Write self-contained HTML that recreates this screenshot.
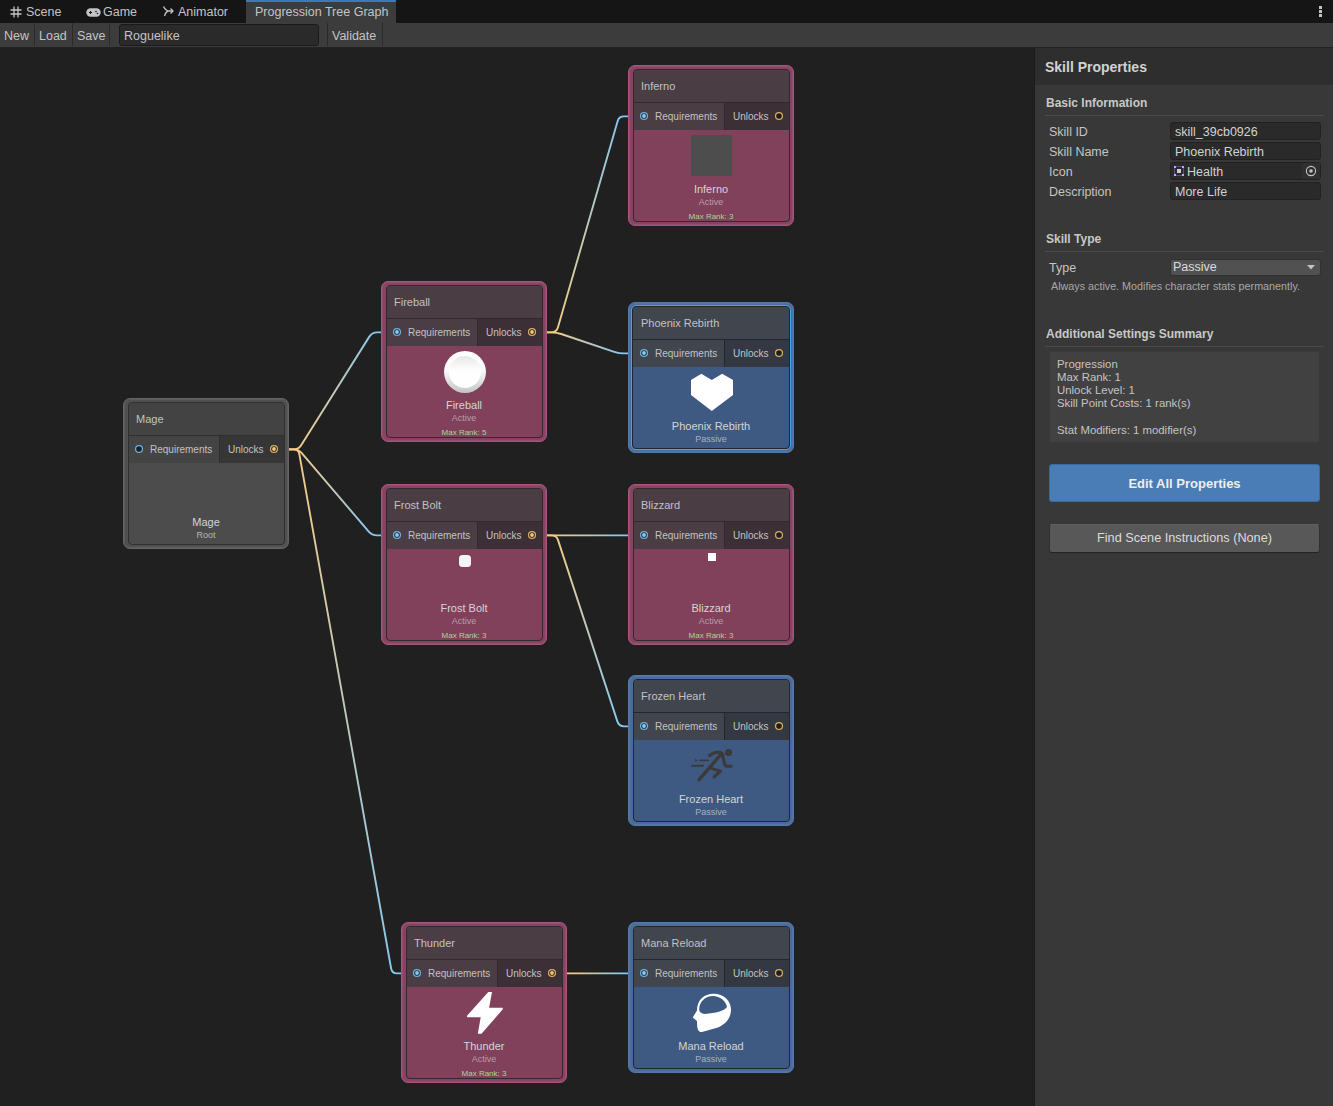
<!DOCTYPE html>
<html><head><meta charset="utf-8"><style>
html,body{margin:0;padding:0;}
body{width:1333px;height:1106px;overflow:hidden;position:relative;background:#202020;font-family:"Liberation Sans", sans-serif;}
.a{position:absolute;white-space:nowrap;}
</style></head><body>
<!-- tab bar -->
<div class="a" style="left:0;top:0;width:1333px;height:23px;background:#151515"></div>
<svg class="a" style="left:10px;top:6px" width="12" height="12" viewBox="0 0 12 12"><g stroke="#c4c4c4" stroke-width="1.3" fill="none"><path d="M4,0.5V11.5M8,0.5V11.5M0.5,4H11.5M0.5,8H11.5"/></g></svg>
<div class="a" style="left:26px;top:4.7px;font-size:12.5px;line-height:15px;color:#c4c4c4">Scene</div>
<svg class="a" style="left:86px;top:8px" width="15" height="9" viewBox="0 0 15 9"><rect x="0.3" y="0.3" width="14.4" height="8.4" rx="4.2" fill="#c4c4c4"/><path d="M3,4.5H6M4.5,3V6" stroke="#151515" stroke-width="1"/><circle cx="10" cy="3.5" r="0.8" fill="#151515"/><circle cx="11.5" cy="5.5" r="0.8" fill="#151515"/></svg>
<div class="a" style="left:103px;top:4.7px;font-size:12.5px;line-height:15px;color:#c4c4c4">Game</div>
<svg class="a" style="left:163px;top:6px" width="11" height="11" viewBox="0 0 11 11"><g stroke="#c4c4c4" stroke-width="1.3" fill="none"><path d="M0.5,0.5 Q3,5 6,5 H10 M6,5 Q3,5 1.5,10"/><path d="M7.5,2.5 L10,5 L7.5,7.5"/></g></svg>
<div class="a" style="left:178px;top:4.7px;font-size:12.5px;line-height:15px;color:#c4c4c4">Animator</div>
<div class="a" style="left:246px;top:0;width:150px;height:23px;background:#3c3c3c;border-top:2px solid #3a79bb;box-sizing:border-box"></div>
<div class="a" style="left:255px;top:4.7px;font-size:12.5px;line-height:15px;color:#c4c4c4">Progression Tree Graph</div>
<div class="a" style="left:1319px;top:6px;width:3px;height:11px"><div class="a" style="left:0;top:0;width:2.5px;height:2.5px;background:#c4c4c4"></div><div class="a" style="left:0;top:4.2px;width:2.5px;height:2.5px;background:#c4c4c4"></div><div class="a" style="left:0;top:8.4px;width:2.5px;height:2.5px;background:#c4c4c4"></div></div>
<!-- toolbar -->
<div class="a" style="left:0;top:23px;width:1333px;height:24px;background:#3c3c3c"></div><div class="a" style="left:0;top:47px;width:1333px;height:1px;background:#222222"></div>
<div class="a" style="left:34px;top:23px;width:1px;height:23px;background:#2a2a2a"></div>
<div class="a" style="left:72px;top:23px;width:1px;height:23px;background:#2a2a2a"></div>
<div class="a" style="left:109px;top:23px;width:1px;height:23px;background:#2a2a2a"></div>
<div class="a" style="left:327px;top:23px;width:1px;height:23px;background:#2a2a2a"></div>
<div class="a" style="left:382px;top:23px;width:1px;height:23px;background:#2a2a2a"></div>
<div class="a" style="left:119px;top:24px;width:200px;height:22px;background:#2a2a2a;border:1px solid #1a1a1a;border-radius:3px;box-sizing:border-box"></div>
<div class="a" style="left:4px;top:29px;font-size:12.5px;line-height:15px;color:#c4c4c4">New</div>
<div class="a" style="left:39px;top:29px;font-size:12.5px;line-height:15px;color:#c4c4c4">Load</div>
<div class="a" style="left:77px;top:29px;font-size:12.5px;line-height:15px;color:#c4c4c4">Save</div>
<div class="a" style="left:124px;top:29px;font-size:12.5px;line-height:15px;color:#c4c4c4">Roguelike</div>
<div class="a" style="left:332px;top:29px;font-size:12.5px;line-height:15px;color:#c4c4c4">Validate</div>
<!-- graph -->
<svg style="position:absolute;left:0;top:0" width="1034" height="1106" viewBox="0 0 1034 1106"><defs><linearGradient id="g0" gradientUnits="userSpaceOnUse" x1="293.5" y1="449.4" x2="377" y2="332.4"><stop offset="0" stop-color="#f4cb84"/><stop offset="1" stop-color="#86c7ef"/></linearGradient><linearGradient id="g1" gradientUnits="userSpaceOnUse" x1="293.5" y1="449.4" x2="377" y2="535.4"><stop offset="0" stop-color="#f4cb84"/><stop offset="1" stop-color="#86c7ef"/></linearGradient><linearGradient id="g2" gradientUnits="userSpaceOnUse" x1="293.5" y1="449.4" x2="397" y2="973.4"><stop offset="0" stop-color="#f4cb84"/><stop offset="1" stop-color="#86c7ef"/></linearGradient><linearGradient id="g3" gradientUnits="userSpaceOnUse" x1="551.5" y1="332.4" x2="624" y2="116.4"><stop offset="0" stop-color="#f4cb84"/><stop offset="1" stop-color="#86c7ef"/></linearGradient><linearGradient id="g4" gradientUnits="userSpaceOnUse" x1="551.5" y1="332.4" x2="624" y2="353.4"><stop offset="0" stop-color="#f4cb84"/><stop offset="1" stop-color="#86c7ef"/></linearGradient><linearGradient id="g5" gradientUnits="userSpaceOnUse" x1="551.5" y1="535.4" x2="624" y2="535.4"><stop offset="0" stop-color="#f4cb84"/><stop offset="1" stop-color="#86c7ef"/></linearGradient><linearGradient id="g6" gradientUnits="userSpaceOnUse" x1="551.5" y1="535.4" x2="624" y2="726.4"><stop offset="0" stop-color="#f4cb84"/><stop offset="1" stop-color="#86c7ef"/></linearGradient><linearGradient id="g7" gradientUnits="userSpaceOnUse" x1="571.5" y1="973.4" x2="624" y2="973.4"><stop offset="0" stop-color="#f4cb84"/><stop offset="1" stop-color="#86c7ef"/></linearGradient></defs><path d="M273.5,449.4 L293.5,449.4 Q298.5,449.4 301.16,445.17 L369.34,336.63 Q372,332.4 377,332.4 L397,332.4" fill="none" stroke="url(#g0)" stroke-width="1.9" stroke-linejoin="round"/><path d="M273.5,449.4 L293.5,449.4 Q298.5,449.4 301.75,453.20 L368.75,531.60 Q372,535.4 377,535.4 L397,535.4" fill="none" stroke="url(#g1)" stroke-width="1.9" stroke-linejoin="round"/><path d="M273.5,449.4 L293.5,449.4 Q298.5,449.4 299.38,454.32 L391.12,968.48 Q392,973.4 397,973.4 L417,973.4" fill="none" stroke="url(#g2)" stroke-width="1.9" stroke-linejoin="round"/><path d="M531.5,332.4 L551.5,332.4 Q556.5,332.4 557.89,327.60 L617.61,121.20 Q619,116.4 624,116.4 L644,116.4" fill="none" stroke="url(#g3)" stroke-width="1.9" stroke-linejoin="round"/><path d="M531.5,332.4 L551.5,332.4 Q556.5,332.4 561.24,333.99 L614.26,351.81 Q619,353.4 624,353.4 L644,353.4" fill="none" stroke="url(#g4)" stroke-width="1.9" stroke-linejoin="round"/><path d="M531.5,535.4 L644,535.4" fill="none" stroke="url(#g5)" stroke-width="1.9" stroke-linejoin="round"/><path d="M531.5,535.4 L551.5,535.4 Q556.5,535.4 558.05,540.15 L617.45,721.65 Q619,726.4 624,726.4 L644,726.4" fill="none" stroke="url(#g6)" stroke-width="1.9" stroke-linejoin="round"/><path d="M551.5,973.4 L644,973.4" fill="none" stroke="url(#g7)" stroke-width="1.9" stroke-linejoin="round"/></svg>
<div style="position:absolute;left:123px;top:398px;width:166px;height:151px;box-sizing:border-box;border-radius:7px;background:#505050;border:1px solid #646464;box-shadow:inset 0 0 0 1px #5a5a5a">
<div style="position:absolute;left:4px;top:3px;right:3px;bottom:3px;border:1px solid #303030;border-radius:4px;background:#4c4c4c;overflow:hidden">
<div style="position:absolute;left:0;top:0;right:0;height:32px;background:#434343;border-bottom:1px solid #303030"></div>
<div style="position:absolute;left:7px;top:10px;font-size:11px;line-height:13px;color:#c2c2c2;white-space:nowrap">Mage</div>
<div style="position:absolute;left:0;top:33px;width:90px;height:27px;background:#444444"></div>
<div style="position:absolute;left:90px;top:33px;right:0;height:27px;background:#363636;border-left:1px solid #303030"></div>
<div style="position:absolute;left:21px;top:41.2px;font-size:10px;line-height:12px;color:#c2c2c2;white-space:nowrap">Requirements</div>
<div style="position:absolute;left:99px;top:41.2px;font-size:10px;line-height:12px;color:#c2c2c2;white-space:nowrap">Unlocks</div>
</div></div>
<svg style="position:absolute;left:134px;top:444.4px" width="10" height="10" viewBox="0 0 10 10"><circle cx="5" cy="5" r="3.45" fill="#1f1f1f" stroke="#6cb2e0" stroke-width="1.25"/></svg>
<svg style="position:absolute;left:268.5px;top:444.4px" width="10" height="10" viewBox="0 0 10 10"><circle cx="5" cy="5" r="3.45" fill="rgba(20,20,24,0.55)" stroke="#dcae62" stroke-width="1.25"/><circle cx="5" cy="5" r="1.9" fill="#f2c77a"/></svg>
<div style="position:absolute;left:123px;top:515.8px;width:166px;text-align:center;font-size:11px;line-height:13px;color:#d4d4d4;white-space:nowrap">Mage</div>
<div style="position:absolute;left:123px;top:529.9px;width:166px;text-align:center;font-size:9px;line-height:10px;color:#b4b4b4;white-space:nowrap">Root</div><div style="position:absolute;left:381px;top:281px;width:166px;height:161px;box-sizing:border-box;border-radius:7px;background:#85445f;border:1px solid #a9547e;box-shadow:inset 0 0 0 1px #974c6f">
<div style="position:absolute;left:4px;top:3px;right:3px;bottom:3px;border:1px solid #36262d;border-radius:4px;background:#82415b;overflow:hidden">
<div style="position:absolute;left:0;top:0;right:0;height:32px;background:#4b3d44;border-bottom:1px solid #36262d"></div>
<div style="position:absolute;left:7px;top:10px;font-size:11px;line-height:13px;color:#c2c2c2;white-space:nowrap">Fireball</div>
<div style="position:absolute;left:0;top:33px;width:90px;height:27px;background:#4b3d44"></div>
<div style="position:absolute;left:90px;top:33px;right:0;height:27px;background:#3d2f36;border-left:1px solid #36262d"></div>
<div style="position:absolute;left:21px;top:41.2px;font-size:10px;line-height:12px;color:#c2c2c2;white-space:nowrap">Requirements</div>
<div style="position:absolute;left:99px;top:41.2px;font-size:10px;line-height:12px;color:#c2c2c2;white-space:nowrap">Unlocks</div>
</div></div>
<svg style="position:absolute;left:392px;top:327.4px" width="10" height="10" viewBox="0 0 10 10"><circle cx="5" cy="5" r="3.45" fill="rgba(20,20,24,0.55)" stroke="#6cb2e0" stroke-width="1.25"/><circle cx="5" cy="5" r="1.9" fill="#86cdf6"/></svg>
<svg style="position:absolute;left:526.5px;top:327.4px" width="10" height="10" viewBox="0 0 10 10"><circle cx="5" cy="5" r="3.45" fill="rgba(20,20,24,0.55)" stroke="#dcae62" stroke-width="1.25"/><circle cx="5" cy="5" r="1.9" fill="#f2c77a"/></svg>
<div style="position:absolute;left:381px;top:398.8px;width:166px;text-align:center;font-size:11px;line-height:13px;color:#d4d4d4;white-space:nowrap">Fireball</div>
<div style="position:absolute;left:381px;top:412.9px;width:166px;text-align:center;font-size:9px;line-height:10px;color:#b59faa;white-space:nowrap">Active</div>
<div style="position:absolute;left:381px;top:427.8px;width:166px;text-align:center;font-size:8px;line-height:9px;color:#a6d695;white-space:nowrap">Max Rank: 5</div>
<div style="position:absolute;left:443.8px;top:350.6px;width:42.3px;height:42.3px;border-radius:50%;background:linear-gradient(to bottom,#ffffff 0,#fafafa 45%,#c4c4c4 100%)"><div style="position:absolute;left:5px;top:5px;right:5px;bottom:5px;border-radius:50%;background:linear-gradient(to bottom,#e8e8e8 0,#fdfdfd 45%,#ffffff 100%)"></div></div><div style="position:absolute;left:628px;top:65px;width:166px;height:161px;box-sizing:border-box;border-radius:7px;background:#85445f;border:1px solid #a9547e;box-shadow:inset 0 0 0 1px #974c6f">
<div style="position:absolute;left:4px;top:3px;right:3px;bottom:3px;border:1px solid #36262d;border-radius:4px;background:#82415b;overflow:hidden">
<div style="position:absolute;left:0;top:0;right:0;height:32px;background:#4b3d44;border-bottom:1px solid #36262d"></div>
<div style="position:absolute;left:7px;top:10px;font-size:11px;line-height:13px;color:#c2c2c2;white-space:nowrap">Inferno</div>
<div style="position:absolute;left:0;top:33px;width:90px;height:27px;background:#4b3d44"></div>
<div style="position:absolute;left:90px;top:33px;right:0;height:27px;background:#3d2f36;border-left:1px solid #36262d"></div>
<div style="position:absolute;left:21px;top:41.2px;font-size:10px;line-height:12px;color:#c2c2c2;white-space:nowrap">Requirements</div>
<div style="position:absolute;left:99px;top:41.2px;font-size:10px;line-height:12px;color:#c2c2c2;white-space:nowrap">Unlocks</div>
</div></div>
<svg style="position:absolute;left:639px;top:111.4px" width="10" height="10" viewBox="0 0 10 10"><circle cx="5" cy="5" r="3.45" fill="rgba(20,20,24,0.55)" stroke="#6cb2e0" stroke-width="1.25"/><circle cx="5" cy="5" r="1.9" fill="#86cdf6"/></svg>
<svg style="position:absolute;left:773.5px;top:111.4px" width="10" height="10" viewBox="0 0 10 10"><circle cx="5" cy="5" r="3.45" fill="#1f1f1f" stroke="#dcae62" stroke-width="1.25"/></svg>
<div style="position:absolute;left:628px;top:182.8px;width:166px;text-align:center;font-size:11px;line-height:13px;color:#d4d4d4;white-space:nowrap">Inferno</div>
<div style="position:absolute;left:628px;top:196.9px;width:166px;text-align:center;font-size:9px;line-height:10px;color:#b59faa;white-space:nowrap">Active</div>
<div style="position:absolute;left:628px;top:211.8px;width:166px;text-align:center;font-size:8px;line-height:9px;color:#a6d695;white-space:nowrap">Max Rank: 3</div>
<div style="position:absolute;left:691px;top:135px;width:41px;height:41px;background:#4d4d4d"></div><div style="position:absolute;left:628px;top:302px;width:166px;height:151px;box-sizing:border-box;border-radius:7px;background:#4a6c9c;border:1px solid #5578aa;box-shadow:inset 0 0 0 1px #5074a5">
<div style="position:absolute;left:2px;top:2px;right:2px;bottom:2px;border:1px solid #46a7e8;border-radius:5px"></div>
<div style="position:absolute;left:3px;top:3px;right:3px;bottom:3px;border:1px solid #22262e;border-radius:4px;background:#3f5a82;overflow:hidden">
<div style="position:absolute;left:0;top:0;right:0;height:32px;background:#41454e;border-bottom:1px solid #22262e"></div>
<div style="position:absolute;left:8px;top:10px;font-size:11px;line-height:13px;color:#c2c2c2;white-space:nowrap">Phoenix Rebirth</div>
<div style="position:absolute;left:0;top:33px;width:91px;height:27px;background:#41454e"></div>
<div style="position:absolute;left:91px;top:33px;right:0;height:27px;background:#343842;border-left:1px solid #22262e"></div>
<div style="position:absolute;left:22px;top:41.2px;font-size:10px;line-height:12px;color:#c2c2c2;white-space:nowrap">Requirements</div>
<div style="position:absolute;left:100px;top:41.2px;font-size:10px;line-height:12px;color:#c2c2c2;white-space:nowrap">Unlocks</div>
</div></div>
<svg style="position:absolute;left:639px;top:348.4px" width="10" height="10" viewBox="0 0 10 10"><circle cx="5" cy="5" r="3.45" fill="rgba(20,20,24,0.55)" stroke="#6cb2e0" stroke-width="1.25"/><circle cx="5" cy="5" r="1.9" fill="#86cdf6"/></svg>
<svg style="position:absolute;left:773.5px;top:348.4px" width="10" height="10" viewBox="0 0 10 10"><circle cx="5" cy="5" r="3.45" fill="#1f1f1f" stroke="#dcae62" stroke-width="1.25"/></svg>
<div style="position:absolute;left:628px;top:419.8px;width:166px;text-align:center;font-size:11px;line-height:13px;color:#d4d4d4;white-space:nowrap">Phoenix Rebirth</div>
<div style="position:absolute;left:628px;top:433.9px;width:166px;text-align:center;font-size:9px;line-height:10px;color:#a6b1c2;white-space:nowrap">Passive</div>
<svg style="position:absolute;left:628px;top:302px" width="166" height="160" viewBox="628 302 166 160"><polygon fill="#ffffff" points="691,380 701.3,373.8 711.8,380 722.2,373.8 733,380 733,395 711.8,411 691,395"/></svg><div style="position:absolute;left:381px;top:484px;width:166px;height:161px;box-sizing:border-box;border-radius:7px;background:#85445f;border:1px solid #a9547e;box-shadow:inset 0 0 0 1px #974c6f">
<div style="position:absolute;left:4px;top:3px;right:3px;bottom:3px;border:1px solid #36262d;border-radius:4px;background:#82415b;overflow:hidden">
<div style="position:absolute;left:0;top:0;right:0;height:32px;background:#4b3d44;border-bottom:1px solid #36262d"></div>
<div style="position:absolute;left:7px;top:10px;font-size:11px;line-height:13px;color:#c2c2c2;white-space:nowrap">Frost Bolt</div>
<div style="position:absolute;left:0;top:33px;width:90px;height:27px;background:#4b3d44"></div>
<div style="position:absolute;left:90px;top:33px;right:0;height:27px;background:#3d2f36;border-left:1px solid #36262d"></div>
<div style="position:absolute;left:21px;top:41.2px;font-size:10px;line-height:12px;color:#c2c2c2;white-space:nowrap">Requirements</div>
<div style="position:absolute;left:99px;top:41.2px;font-size:10px;line-height:12px;color:#c2c2c2;white-space:nowrap">Unlocks</div>
</div></div>
<svg style="position:absolute;left:392px;top:530.4px" width="10" height="10" viewBox="0 0 10 10"><circle cx="5" cy="5" r="3.45" fill="rgba(20,20,24,0.55)" stroke="#6cb2e0" stroke-width="1.25"/><circle cx="5" cy="5" r="1.9" fill="#86cdf6"/></svg>
<svg style="position:absolute;left:526.5px;top:530.4px" width="10" height="10" viewBox="0 0 10 10"><circle cx="5" cy="5" r="3.45" fill="rgba(20,20,24,0.55)" stroke="#dcae62" stroke-width="1.25"/><circle cx="5" cy="5" r="1.9" fill="#f2c77a"/></svg>
<div style="position:absolute;left:381px;top:601.8px;width:166px;text-align:center;font-size:11px;line-height:13px;color:#d4d4d4;white-space:nowrap">Frost Bolt</div>
<div style="position:absolute;left:381px;top:615.9px;width:166px;text-align:center;font-size:9px;line-height:10px;color:#b59faa;white-space:nowrap">Active</div>
<div style="position:absolute;left:381px;top:630.8px;width:166px;text-align:center;font-size:8px;line-height:9px;color:#a6d695;white-space:nowrap">Max Rank: 3</div>
<div style="position:absolute;left:459px;top:555px;width:12px;height:11.5px;border-radius:3.5px;background:#f4f4f4"></div><div style="position:absolute;left:628px;top:484px;width:166px;height:161px;box-sizing:border-box;border-radius:7px;background:#85445f;border:1px solid #a9547e;box-shadow:inset 0 0 0 1px #974c6f">
<div style="position:absolute;left:4px;top:3px;right:3px;bottom:3px;border:1px solid #36262d;border-radius:4px;background:#82415b;overflow:hidden">
<div style="position:absolute;left:0;top:0;right:0;height:32px;background:#4b3d44;border-bottom:1px solid #36262d"></div>
<div style="position:absolute;left:7px;top:10px;font-size:11px;line-height:13px;color:#c2c2c2;white-space:nowrap">Blizzard</div>
<div style="position:absolute;left:0;top:33px;width:90px;height:27px;background:#4b3d44"></div>
<div style="position:absolute;left:90px;top:33px;right:0;height:27px;background:#3d2f36;border-left:1px solid #36262d"></div>
<div style="position:absolute;left:21px;top:41.2px;font-size:10px;line-height:12px;color:#c2c2c2;white-space:nowrap">Requirements</div>
<div style="position:absolute;left:99px;top:41.2px;font-size:10px;line-height:12px;color:#c2c2c2;white-space:nowrap">Unlocks</div>
</div></div>
<svg style="position:absolute;left:639px;top:530.4px" width="10" height="10" viewBox="0 0 10 10"><circle cx="5" cy="5" r="3.45" fill="rgba(20,20,24,0.55)" stroke="#6cb2e0" stroke-width="1.25"/><circle cx="5" cy="5" r="1.9" fill="#86cdf6"/></svg>
<svg style="position:absolute;left:773.5px;top:530.4px" width="10" height="10" viewBox="0 0 10 10"><circle cx="5" cy="5" r="3.45" fill="#1f1f1f" stroke="#dcae62" stroke-width="1.25"/></svg>
<div style="position:absolute;left:628px;top:601.8px;width:166px;text-align:center;font-size:11px;line-height:13px;color:#d4d4d4;white-space:nowrap">Blizzard</div>
<div style="position:absolute;left:628px;top:615.9px;width:166px;text-align:center;font-size:9px;line-height:10px;color:#b59faa;white-space:nowrap">Active</div>
<div style="position:absolute;left:628px;top:630.8px;width:166px;text-align:center;font-size:8px;line-height:9px;color:#a6d695;white-space:nowrap">Max Rank: 3</div>
<div style="position:absolute;left:708.2px;top:553.4px;width:7.6px;height:7.6px;background:#ffffff"></div><div style="position:absolute;left:628px;top:675px;width:166px;height:151px;box-sizing:border-box;border-radius:7px;background:#4a6c9c;border:1px solid #5578aa;box-shadow:inset 0 0 0 1px #5074a5">
<div style="position:absolute;left:4px;top:3px;right:3px;bottom:3px;border:1px solid #22262e;border-radius:4px;background:#3f5a82;overflow:hidden">
<div style="position:absolute;left:0;top:0;right:0;height:32px;background:#41454e;border-bottom:1px solid #22262e"></div>
<div style="position:absolute;left:7px;top:10px;font-size:11px;line-height:13px;color:#c2c2c2;white-space:nowrap">Frozen Heart</div>
<div style="position:absolute;left:0;top:33px;width:90px;height:27px;background:#41454e"></div>
<div style="position:absolute;left:90px;top:33px;right:0;height:27px;background:#343842;border-left:1px solid #22262e"></div>
<div style="position:absolute;left:21px;top:41.2px;font-size:10px;line-height:12px;color:#c2c2c2;white-space:nowrap">Requirements</div>
<div style="position:absolute;left:99px;top:41.2px;font-size:10px;line-height:12px;color:#c2c2c2;white-space:nowrap">Unlocks</div>
</div></div>
<svg style="position:absolute;left:639px;top:721.4px" width="10" height="10" viewBox="0 0 10 10"><circle cx="5" cy="5" r="3.45" fill="rgba(20,20,24,0.55)" stroke="#6cb2e0" stroke-width="1.25"/><circle cx="5" cy="5" r="1.9" fill="#86cdf6"/></svg>
<svg style="position:absolute;left:773.5px;top:721.4px" width="10" height="10" viewBox="0 0 10 10"><circle cx="5" cy="5" r="3.45" fill="#1f1f1f" stroke="#dcae62" stroke-width="1.25"/></svg>
<div style="position:absolute;left:628px;top:792.8px;width:166px;text-align:center;font-size:11px;line-height:13px;color:#d4d4d4;white-space:nowrap">Frozen Heart</div>
<div style="position:absolute;left:628px;top:806.9px;width:166px;text-align:center;font-size:9px;line-height:10px;color:#a6b1c2;white-space:nowrap">Passive</div>
<svg style="position:absolute;left:628px;top:675px" width="166" height="160" viewBox="628 675 166 160"><g fill="none" stroke="#3a3a3a" stroke-linejoin="round"><circle cx="728.6" cy="752.4" r="3.5" fill="#3a3a3a" stroke="none"/><path d="M709.6,755.6 Q713.5,751.6 719.5,752.3 Q722,752.6 723.3,755" stroke-width="3" stroke-linecap="round"/><path d="M720.8,754.5 L699,779.8" stroke-width="3.4" stroke-linecap="round"/><path d="M721.5,755 Q724,758 724.3,763 Q724.6,766 727.5,766.3 L732.5,766.3" stroke-width="3" stroke-linecap="butt"/><path d="M712,768.6 L720.6,771.2 L714,777" stroke-width="3" stroke-linecap="round"/><path d="M691.2,765.8 L703.8,765.8" stroke-width="1.8"/><path d="M700.2,760.4 L708.2,760.4" stroke-width="1.8" stroke-linecap="round"/><polygon points="695.2,758.8 697.8,760.4 695.2,762" fill="#3a3a3a" stroke="none"/></g></svg><div style="position:absolute;left:401px;top:922px;width:166px;height:161px;box-sizing:border-box;border-radius:7px;background:#85445f;border:1px solid #a9547e;box-shadow:inset 0 0 0 1px #974c6f">
<div style="position:absolute;left:4px;top:3px;right:3px;bottom:3px;border:1px solid #36262d;border-radius:4px;background:#82415b;overflow:hidden">
<div style="position:absolute;left:0;top:0;right:0;height:32px;background:#4b3d44;border-bottom:1px solid #36262d"></div>
<div style="position:absolute;left:7px;top:10px;font-size:11px;line-height:13px;color:#c2c2c2;white-space:nowrap">Thunder</div>
<div style="position:absolute;left:0;top:33px;width:90px;height:27px;background:#4b3d44"></div>
<div style="position:absolute;left:90px;top:33px;right:0;height:27px;background:#3d2f36;border-left:1px solid #36262d"></div>
<div style="position:absolute;left:21px;top:41.2px;font-size:10px;line-height:12px;color:#c2c2c2;white-space:nowrap">Requirements</div>
<div style="position:absolute;left:99px;top:41.2px;font-size:10px;line-height:12px;color:#c2c2c2;white-space:nowrap">Unlocks</div>
</div></div>
<svg style="position:absolute;left:412px;top:968.4px" width="10" height="10" viewBox="0 0 10 10"><circle cx="5" cy="5" r="3.45" fill="rgba(20,20,24,0.55)" stroke="#6cb2e0" stroke-width="1.25"/><circle cx="5" cy="5" r="1.9" fill="#86cdf6"/></svg>
<svg style="position:absolute;left:546.5px;top:968.4px" width="10" height="10" viewBox="0 0 10 10"><circle cx="5" cy="5" r="3.45" fill="rgba(20,20,24,0.55)" stroke="#dcae62" stroke-width="1.25"/><circle cx="5" cy="5" r="1.9" fill="#f2c77a"/></svg>
<div style="position:absolute;left:401px;top:1039.8px;width:166px;text-align:center;font-size:11px;line-height:13px;color:#d4d4d4;white-space:nowrap">Thunder</div>
<div style="position:absolute;left:401px;top:1053.9px;width:166px;text-align:center;font-size:9px;line-height:10px;color:#b59faa;white-space:nowrap">Active</div>
<div style="position:absolute;left:401px;top:1068.8px;width:166px;text-align:center;font-size:8px;line-height:9px;color:#a6d695;white-space:nowrap">Max Rank: 3</div>
<svg style="position:absolute;left:401px;top:922px" width="166" height="160" viewBox="401 922 166 160"><path fill="#ffffff" d="M492,992.1 L488.3,992.1 L466.8,1016 L467.3,1017.3 L480.7,1017.3 L477.8,1033.8 L481.5,1033.8 L503,1009.1 L502.5,1007.8 L489.1,1007.8 Z"/></svg><div style="position:absolute;left:628px;top:922px;width:166px;height:151px;box-sizing:border-box;border-radius:7px;background:#4a6c9c;border:1px solid #5578aa;box-shadow:inset 0 0 0 1px #5074a5">
<div style="position:absolute;left:4px;top:3px;right:3px;bottom:3px;border:1px solid #22262e;border-radius:4px;background:#3f5a82;overflow:hidden">
<div style="position:absolute;left:0;top:0;right:0;height:32px;background:#41454e;border-bottom:1px solid #22262e"></div>
<div style="position:absolute;left:7px;top:10px;font-size:11px;line-height:13px;color:#c2c2c2;white-space:nowrap">Mana Reload</div>
<div style="position:absolute;left:0;top:33px;width:90px;height:27px;background:#41454e"></div>
<div style="position:absolute;left:90px;top:33px;right:0;height:27px;background:#343842;border-left:1px solid #22262e"></div>
<div style="position:absolute;left:21px;top:41.2px;font-size:10px;line-height:12px;color:#c2c2c2;white-space:nowrap">Requirements</div>
<div style="position:absolute;left:99px;top:41.2px;font-size:10px;line-height:12px;color:#c2c2c2;white-space:nowrap">Unlocks</div>
</div></div>
<svg style="position:absolute;left:639px;top:968.4px" width="10" height="10" viewBox="0 0 10 10"><circle cx="5" cy="5" r="3.45" fill="rgba(20,20,24,0.55)" stroke="#6cb2e0" stroke-width="1.25"/><circle cx="5" cy="5" r="1.9" fill="#86cdf6"/></svg>
<svg style="position:absolute;left:773.5px;top:968.4px" width="10" height="10" viewBox="0 0 10 10"><circle cx="5" cy="5" r="3.45" fill="#1f1f1f" stroke="#dcae62" stroke-width="1.25"/></svg>
<div style="position:absolute;left:628px;top:1039.8px;width:166px;text-align:center;font-size:11px;line-height:13px;color:#d4d4d4;white-space:nowrap">Mana Reload</div>
<div style="position:absolute;left:628px;top:1053.9px;width:166px;text-align:center;font-size:9px;line-height:10px;color:#a6b1c2;white-space:nowrap">Passive</div>
<svg style="position:absolute;left:628px;top:922px" width="166" height="160" viewBox="628 922 166 160"><path fill="#ffffff" fill-rule="evenodd" d="M692.7,1017.5 L697,1010.5 C697,1000 704,993.7 713.5,993.7 C724,993.7 731,1001 731,1009.5 C731,1018 726,1024 718,1027.5 L702,1032 C698,1032.5 697,1029 697,1021 Z M699.2,1010 C699,1002 705,996 713,996 C720,996 726,1001 727,1007 C724,1011 716,1013 705,1014 C701,1013.5 699.5,1012 699.2,1010 Z"/></svg>
<!-- inspector -->
<div class="a" style="left:1034px;top:48px;width:1px;height:1058px;background:#1c1c1c"></div>
<div class="a" style="left:1035px;top:48px;width:298px;height:1058px;background:#383838"></div>
<div class="a" style="left:1035px;top:48px;width:298px;height:37px;background:#2e2e2e"></div>
<div class="a" style="left:1045px;top:59px;font-size:14px;line-height:17px;font-weight:700;color:#d2d2d2">Skill Properties</div>
<div class="a" style="left:1046px;top:95.5px;font-size:12px;line-height:14px;font-weight:700;color:#c8c8c8">Basic Information</div>
<div class="a" style="left:1045px;top:115px;width:279px;height:1px;background:#4a4a4a"></div>
<div class="a" style="left:1049px;top:125px;font-size:12.5px;line-height:15px;color:#c4c4c4">Skill ID</div>
<div class="a" style="left:1049px;top:145px;font-size:12.5px;line-height:15px;color:#c4c4c4">Skill Name</div>
<div class="a" style="left:1049px;top:165px;font-size:12.5px;line-height:15px;color:#c4c4c4">Icon</div>
<div class="a" style="left:1049px;top:185px;font-size:12.5px;line-height:15px;color:#c4c4c4">Description</div>
<div class="a" style="left:1170px;top:122px;width:151px;height:18px;background:#2a2a2a;border:1px solid #212121;border-radius:3px;box-sizing:border-box"></div>
<div class="a" style="left:1170px;top:142px;width:151px;height:18px;background:#2a2a2a;border:1px solid #212121;border-radius:3px;box-sizing:border-box"></div>
<div class="a" style="left:1170px;top:162px;width:151px;height:18px;background:#2a2a2a;border:1px solid #212121;border-radius:3px;box-sizing:border-box"></div>
<div class="a" style="left:1302px;top:163px;width:18px;height:16px;background:#303030"></div>
<div class="a" style="left:1170px;top:182px;width:151px;height:18px;background:#2a2a2a;border:1px solid #212121;border-radius:3px;box-sizing:border-box"></div>
<div class="a" style="left:1175px;top:125px;font-size:12.5px;line-height:15px;color:#d2d2d2">skill_39cb0926</div>
<div class="a" style="left:1175px;top:145px;font-size:12.5px;line-height:15px;color:#d2d2d2">Phoenix Rebirth</div>
<svg class="a" style="left:1174px;top:166px" width="10" height="10" viewBox="0 0 10 10"><rect x="0.5" y="0.5" width="9" height="9" fill="none" stroke="#5e4c84" stroke-width="1"/><rect x="0" y="0" width="2" height="2" fill="#c7a3ff"/><rect x="8" y="0" width="2" height="2" fill="#c7a3ff"/><rect x="0" y="8" width="2" height="2" fill="#c7a3ff"/><rect x="8" y="8" width="2" height="2" fill="#c7a3ff"/><rect x="3" y="3" width="4" height="4" fill="#cccccc"/></svg>
<div class="a" style="left:1187px;top:165px;font-size:12.5px;line-height:15px;color:#d2d2d2">Health</div>
<svg class="a" style="left:1305px;top:165px" width="12" height="12" viewBox="0 0 12 12"><circle cx="6" cy="6" r="4.6" fill="none" stroke="#c4c4c4" stroke-width="1.1"/><circle cx="6" cy="6" r="1.8" fill="#c4c4c4"/></svg>
<div class="a" style="left:1175px;top:185px;font-size:12.5px;line-height:15px;color:#d2d2d2">More Life</div>
<div class="a" style="left:1046px;top:231.5px;font-size:12px;line-height:14px;font-weight:700;color:#c8c8c8">Skill Type</div>
<div class="a" style="left:1045px;top:251px;width:279px;height:1px;background:#4a4a4a"></div>
<div class="a" style="left:1049px;top:261px;font-size:12.5px;line-height:15px;color:#c4c4c4">Type</div>
<div class="a" style="left:1170px;top:259px;width:151px;height:17px;background:#515151;border:1px solid #303030;border-radius:3px;box-sizing:border-box"></div>
<div class="a" style="left:1173px;top:260px;font-size:12.5px;line-height:15px;color:#dcdcdc">Passive</div>
<svg class="a" style="left:1307px;top:265px" width="8" height="5" viewBox="0 0 8 5"><polygon points="0,0 8,0 4,4.5" fill="#c4c4c4"/></svg>
<div class="a" style="left:1051px;top:280px;font-size:10.75px;line-height:13px;color:#a8a8a8">Always active. Modifies character stats permanently.</div>
<div class="a" style="left:1046px;top:327px;font-size:12px;line-height:14px;font-weight:700;color:#c8c8c8">Additional Settings Summary</div>
<div class="a" style="left:1045px;top:346px;width:279px;height:1px;background:#4a4a4a"></div>
<div class="a" style="left:1050px;top:352px;width:269px;height:90px;background:#414141"></div>
<div class="a" style="left:1057px;top:357.7px;font-size:11.4px;line-height:13.2px;color:#c4c4c4;white-space:pre">Progression
Max Rank: 1
Unlock Level: 1
Skill Point Costs: 1 rank(s)

Stat Modifiers: 1 modifier(s)</div>
<div class="a" style="left:1049px;top:464px;width:271px;height:38px;background:#4a7db5;border:1px solid #3a6aa0;border-radius:3px;box-sizing:border-box"></div>
<div class="a" style="left:1049px;top:476px;width:271px;text-align:center;font-size:13px;line-height:16px;font-weight:700;color:#eeeeee">Edit All Properties</div>
<div class="a" style="left:1049px;top:524px;width:271px;height:29px;background:#585858;border:1px solid #303030;border-bottom-color:#242424;border-top-color:#5f5f5f;border-radius:3px;box-sizing:border-box"></div>
<div class="a" style="left:1049px;top:530px;width:271px;text-align:center;font-size:12.7px;line-height:16px;color:#dcdcdc">Find Scene Instructions (None)</div>
</body></html>
